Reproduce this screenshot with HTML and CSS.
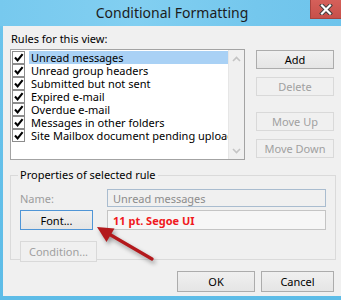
FILE: index.html
```html
<!DOCTYPE html>
<html lang="en">
<head>
  <meta charset="UTF-8" />
  <title>Conditional Formatting</title>
  <link rel="stylesheet" href="styles.css">
</head>
<body>

  <div class="window">
    <!-- Title bar -->
    <div class="titlebar">
      <span class="title">Conditional Formatting</span>
      <button class="close" aria-label="Close">
        <svg width="14" height="11" viewBox="0 0 14 11">
          <path d="M3 1.5 L11 9.5 M11 1.5 L3 9.5" stroke="#3a3a3a" stroke-width="4" stroke-linecap="square" />
          <path d="M3 1.5 L11 9.5 M11 1.5 L3 9.5" stroke="#fff" stroke-width="2.2" stroke-linecap="square" />
        </svg>
      </button>
    </div>

    <div class="client">
      <!-- Rules list -->
      <div class="rules">
        <div class="caption">Rules for this view:</div>
        <div class="rules-row">
          <div class="listbox">
            <ul class="rule-list">
              <li class="selected"><span class="check"></span><span class="rule-name">Unread messages</span></li>
              <li><span class="check"></span><span class="rule-name">Unread group headers</span></li>
              <li><span class="check"></span><span class="rule-name">Submitted but not sent</span></li>
              <li><span class="check"></span><span class="rule-name">Expired e-mail</span></li>
              <li><span class="check"></span><span class="rule-name">Overdue e-mail</span></li>
              <li><span class="check"></span><span class="rule-name">Messages in other folders</span></li>
              <li><span class="check"></span><span class="rule-name">Site Mailbox document pending upload</span></li>
            </ul>
            <div class="scrollbar">
              <svg width="9" height="6" viewBox="0 0 9 6"><path d="M1 5 L4.5 1.5 L8 5" fill="none" stroke="#c4c4c4" stroke-width="1.6" /></svg>
              <svg width="9" height="6" viewBox="0 0 9 6"><path d="M1 1 L4.5 4.5 L8 1" fill="none" stroke="#c4c4c4" stroke-width="1.6" /></svg>
            </div>
          </div>
          <div class="rule-buttons">
            <button class="btn">Add</button>
            <button class="btn" disabled>Delete</button>
            <button class="btn btn-up" disabled>Move Up</button>
            <button class="btn" disabled>Move Down</button>
          </div>
        </div>
      </div>

      <!-- Properties group -->
      <fieldset class="props">
        <legend>Properties of selected rule</legend>
        <div class="props-grid">
          <label class="name-label">Name:</label>
          <div class="field field-name">Unread messages</div>
          <button class="btn btn-font">Font...</button>
          <div class="field field-font">11 pt. Segoe UI</div>
          <button class="btn btn-condition" disabled>Condition...</button>
        </div>
      </fieldset>

      <div class="footer">
        <button class="btn btn-ok">OK</button>
        <button class="btn btn-cancel">Cancel</button>
      </div>
    </div>

    <!-- Annotation arrow -->
    <svg class="arrow" width="70" height="48" viewBox="0 0 70 48">
      <path d="M62 41 L19 16" stroke="#b3191c" stroke-width="3.2" stroke-linecap="round" />
      <path d="M7 9 L24.5 10.5 L16.5 24 Z" fill="#b3191c" />
    </svg>
  </div>

</body>
</html>
```

FILE: styles.css
```css
/* Basic Reset */
* {
  box-sizing: border-box;
}

body {
  margin: 0;
  background: #5dbce7;
  font-family: "Noto Sans", sans-serif;
  font-size: 11px;
  color: #000;
}

.window {
  position: relative;
  width: 341px;
  height: 300px;
  display: flex;
  flex-direction: column;
  background: linear-gradient(180deg, #7ecdf0 0%, #6cc4ec 10%, #5dbce7 100%);
}

/* Title bar */
.titlebar {
  position: relative;
  height: 26px;
  display: flex;
  align-items: center;
  justify-content: center;
  background: linear-gradient(90deg, #77c9ee 0%, #82cff1 40%, #74c7ed 75%, #6ec4ec 100%);
}

.title {
  font-size: 14px;
  color: #1c1c1c;
  padding-left: 3px;
  margin-top: -1px;
}

.close {
  position: absolute;
  top: 0;
  right: 0;
  width: 31px;
  height: 19px;
  border: none;
  border-left: 1px solid #a8443f;
  border-bottom: 1px solid #a8443f;
  padding: 0;
  background: linear-gradient(180deg, #d5605a 0%, #c7504a 100%);
  display: flex;
  align-items: center;
  justify-content: center;
}

/* Client area */
.client {
  margin-left: 3px;
  height: 270px;
  background: #f0f0f0;
  padding: 5px 7px 0 7px;
}

.caption {
  line-height: 15px;
  padding-left: 1px;
  margin-bottom: 3px;
}

.rules-row {
  display: flex;
  align-items: flex-start;
}

.listbox {
  width: 235px;
  height: 111px;
  border: 1px solid #a3a3a3;
  background: #fff;
  display: flex;
}

.rule-list {
  list-style: none;
  margin: 0;
  padding: 1px 0 0 0;
  flex: 1;
  min-width: 0;
  overflow: hidden;
}

.rule-list li {
  height: 13px;
  display: flex;
  align-items: center;
  white-space: nowrap;
}

.check {
  flex: none;
  width: 13px;
  height: 13px;
  margin-left: 1px;
  margin-right: 4px;
  border: 1px solid #8c8c8c;
  background: #fff url("data:image/svg+xml,%3Csvg xmlns='http://www.w3.org/2000/svg' width='11' height='11'%3E%3Cpath d='M2 5.5 L4.6 8.4 L9.6 2.2' fill='none' stroke='%23000' stroke-width='2.1'/%3E%3C/svg%3E") center no-repeat;
}

.rule-name {
  flex: 1 0 auto;
  line-height: 13px;
  padding-left: 2px;
}

.rule-list li.selected .rule-name {
  background: #a9d1f5;
}

.scrollbar {
  width: 16px;
  flex: none;
  background: #f0f0f0;
  border-left: 1px solid #e6e6e6;
  display: flex;
  flex-direction: column;
  justify-content: space-between;
  align-items: center;
  padding: 6px 0 5px 0;
}

.rule-buttons {
  width: 78px;
  margin-left: 11px;
  margin-top: 1px;
  display: flex;
  flex-direction: column;
}

/* Buttons */
.btn {
  font-family: inherit;
  font-size: 11px;
  height: 19px;
  padding: 0;
  border: 1px solid #acacac;
  background: linear-gradient(180deg, #f0f0f0 0%, #e5e5e5 100%);
  color: #000;
  line-height: 15px;
}

.btn:disabled {
  border-color: #d9d9d9;
  background: #f0f0f0;
  color: #a0a0a0;
}

.rule-buttons .btn {
  margin-bottom: 8px;
}

.rule-buttons .btn-up {
  margin-top: 8px;
}

/* Properties group */
.props {
  margin: 1px 0 0 0;
  width: 326px;
  border: 1px solid #dadada;
  padding: 6px 9px 5px 9px;
}

.props legend {
  padding: 0 2px;
  margin-left: -2px;
  line-height: 16px;
}

.props-grid {
  display: grid;
  grid-template-columns: 87px 219px;
  grid-template-rows: 18px 20px 21px;
  row-gap: 3px;
  align-items: stretch;
}

.name-label {
  color: #9d9d9d;
  align-self: center;
}

.field {
  padding-left: 5px;
  display: flex;
  align-items: center;
}

.field-name {
  border: 1px solid #a9bccf;
  background: #f0f0f0;
  color: #8c8c8c;
}

.field-font {
  border: 1px solid #c4c4c4;
  background: #f6f6f6;
  color: #f01820;
  font-weight: bold;
}

.btn-font {
  width: 73px;
  height: 20px;
  border-color: #4f95d6;
}

.btn-condition {
  width: 77px;
  height: 21px;
  margin-top: 8px;
}

/* Footer */
.footer {
  display: flex;
  justify-content: flex-end;
  gap: 6px;
  margin-top: 11px;
}

.btn-ok {
  width: 78px;
  height: 21px;
}

.btn-cancel {
  width: 73px;
  height: 21px;
}

/* Annotation arrow */
.arrow {
  position: absolute;
  left: 90px;
  top: 218px;
  filter: drop-shadow(2px 3px 2px rgba(0, 0, 0, 0.35));
}
```
